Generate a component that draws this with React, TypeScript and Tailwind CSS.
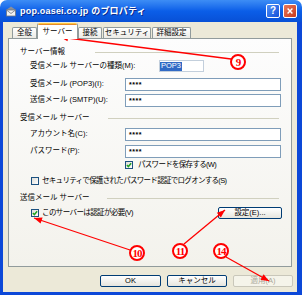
import React from "react";

const font = "font-['Liberation_Sans','Noto_Sans_CJK_JP',sans-serif]";

const Field = ({ value }: { value: string }) => (
  <div className="w-[156px] h-[13px] border border-[#7F9DB9] bg-white flex items-center pl-[3px] text-[7px] font-bold tracking-[0.5px]">
    {value}
  </div>
);

const Check = ({ checked }: { checked?: boolean }) => (
  <div className="w-[8px] h-[8px] border border-[#1C5180] bg-linear-to-br from-[#DCDCD7] to-white flex items-center justify-center shrink-0">
    {checked && (
      <svg viewBox="0 0 7 7" className="w-[6px] h-[6px]">
        <path d="M1 3.4 L2.8 5.3 L6 1.5" stroke="#21A121" strokeWidth="1.7" fill="none" />
      </svg>
    )}
  </div>
);

const Heading = ({ label, w, line }: { label: string; w: string; line: string }) => (
  <div className="flex items-center h-[14px]">
    <div className={w}>{label}</div>
    <div className={`${line} h-px bg-[#D0D0BF]`} />
  </div>
);

const Tab = ({ label, w, active }: { label: string; w: string; active?: boolean }) =>
  active ? (
    <div className={`${w} h-[16px] -mb-px border-x border-[#919B9C] bg-white rounded-t-[2px] flex flex-col`}>
      <div className="h-[2px] bg-[#E68B2C] rounded-t-[2px] border-t border-[#FFC73C]" />
      <div className="flex-1 flex items-center justify-center">{label}</div>
    </div>
  ) : (
    <div className={`${w} h-[11px] border-x border-t border-[#919B9C] rounded-t-[2px] bg-linear-to-b from-white to-[#ECEBE6] flex items-center justify-center`}>
      {label}
    </div>
  );

const Button = ({ label, w, disabled }: { label: string; w: string; disabled?: boolean }) => (
  <div
    className={`${w} h-[12px] rounded-[2px] border flex items-center justify-center ${
      disabled
        ? "border-[#C9C7BA] text-[#ACA899] bg-[#F5F4EA]"
        : "border-[#003C74] bg-linear-to-b from-white to-[#E6E5DE]"
    }`}
  >
    {label}
  </div>
);

const arrows = [
  { x1: 231, y1: 59, x2: 60, y2: 37 },
  { x1: 130, y1: 250, x2: 34, y2: 218 },
  { x1: 184, y1: 244, x2: 225, y2: 210 },
  { x1: 226, y1: 257, x2: 269, y2: 281 },
];

const marks = [
  { n: "9", x: 238, y: 62 },
  { n: "10", x: 137, y: 253 },
  { n: "11", x: 180, y: 251 },
  { n: "14", x: 221, y: 251 },
];

const head = (a: { x1: number; y1: number; x2: number; y2: number }) => {
  const dx = a.x2 - a.x1;
  const dy = a.y2 - a.y1;
  const len = Math.hypot(dx, dy);
  const ux = dx / len;
  const uy = dy / len;
  const bx = a.x2 - ux * 8;
  const by = a.y2 - uy * 8;
  const px = -uy * 3.2;
  const py = ux * 3.2;
  return `${a.x2},${a.y2} ${bx + px},${by + py} ${bx - px},${by - py}`;
};

export default function App() {
  return (
    <div className={`relative w-[302px] h-[295px] bg-white ${font} text-[7.5px] leading-none text-black`}>
      <div className="flex flex-col w-full h-full">
        {/* title bar */}
        <div className="h-[22px] rounded-t-[7px] bg-linear-to-b from-[#3D8DF5] via-[#0B5EE8] to-[#0850D6] flex items-center pl-[5px] pr-[5px]">
          <svg viewBox="0 0 12 12" className="w-[12px] h-[12px]">
            <path d="M1 5 L6 1.5 L11 5 Z" fill="#8A8F98" />
            <rect x="1.5" y="5" width="9" height="6" fill="#F2F2F2" stroke="#6D7480" strokeWidth="0.8" />
            <path d="M1.5 5 L6 8.5 L10.5 5" fill="none" stroke="#6D7480" strokeWidth="0.8" />
          </svg>
          <div className="ml-[3px] text-white font-bold text-[9px] tracking-[0.2px] [text-shadow:1px_1px_0_#0A2C8F]">
            pop.oasei.co.jp のプロパティ
          </div>
          <div className="ml-auto flex gap-[3px]">
            <div className="w-[14px] h-[14px] rounded-[2px] border border-white bg-linear-to-br from-[#4F8FF7] to-[#1650D8] flex items-center justify-center text-white font-bold text-[10px]">
              ?
            </div>
            <div className="w-[14px] h-[14px] rounded-[2px] border border-white bg-linear-to-br from-[#E9785A] to-[#C8391A] flex items-center justify-center">
              <svg viewBox="0 0 10 10" className="w-[8px] h-[8px]">
                <path d="M2 2 L8 8 M8 2 L2 8" stroke="white" strokeWidth="1.8" />
              </svg>
            </div>
          </div>
        </div>

        {/* body */}
        <div className="flex-1 flex flex-col bg-[#ECE9D8] border-l-[3px] border-r-[5px] border-b-[3px] border-[#0C48D8]">
          <div className="relative z-10 mt-px h-[15px] flex items-end ml-[9px]">
            <Tab label="全般" w="w-[25px]" />
            <Tab label="サーバー" w="w-[41px]" active />
            <Tab label="接続" w="w-[24px]" />
            <div className="w-px" />
            <Tab label="セキュリティ" w="w-[48px]" />
            <div className="w-px" />
            <Tab label="詳細設定" w="w-[39px]" />
          </div>

          <div className="h-[229px] ml-[5px] mr-[5px] border border-[#919B9C] bg-linear-to-b from-[#FDFDFD] to-[#F3F2EC] flex flex-col pl-[11px]">
            <div className="mt-[6px]">
              <Heading label="サーバー情報" w="w-[75px]" line="w-[184px]" />
            </div>
            <div className="h-[14px] flex items-center pl-[10px]">
              <div className="w-[129px]">受信メール サーバーの種類(M):</div>
              <div className="w-[45px] h-[12px] border border-[#C3CFDC] bg-white flex items-center">
                <span className="bg-[#316AC5] text-white px-px h-[9px] flex items-center">POP3</span>
              </div>
            </div>
            <div className="mt-[4px] h-[14px] flex items-center pl-[10px]">
              <div className="w-[95px]">受信メール (POP3)(I):</div>
              <Field value="****" />
            </div>
            <div className="mt-[2px] h-[14px] flex items-center pl-[10px]">
              <div className="w-[95px]">送信メール (SMTP)(U):</div>
              <Field value="****" />
            </div>
            <div className="mt-[4px]">
              <Heading label="受信メール サーバー" w="w-[88px]" line="w-[171px]" />
            </div>
            <div className="mt-[2px] h-[14px] flex items-center pl-[10px]">
              <div className="w-[95px]">アカウント名(C):</div>
              <Field value="****" />
            </div>
            <div className="mt-[3px] h-[14px] flex items-center pl-[10px]">
              <div className="w-[95px]">パスワード(P):</div>
              <Field value="****" />
            </div>
            <div className="h-[14px] flex items-center pl-[105px] gap-[5px]">
              <Check checked />
              <span className="tracking-[-0.7px]">パスワードを保存する(W)</span>
            </div>
            <div className="mt-[2px] h-[14px] flex items-center pl-[11px] gap-[3px]">
              <Check />
              <span className="tracking-[-0.7px]">セキュリティで保護されたパスワード認証でログオンする(S)</span>
            </div>
            <div className="mt-[3px]">
              <Heading label="送信メール サーバー" w="w-[87px]" line="w-[172px]" />
            </div>
            <div className="mt-px h-[14px] flex items-center pl-[11px] gap-[3px] pr-[9px]">
              <Check checked />
              <span className="tracking-[-0.6px]">このサーバーは認証が必要(V)</span>
              <div className="ml-auto">
                <Button label="設定(E)..." w="w-[64px]" />
              </div>
            </div>
          </div>

          <div className="mt-[8px] flex justify-end gap-[6px] pr-[4px]">
            <Button label="OK" w="w-[61px]" />
            <Button label="キャンセル" w="w-[60px]" />
            <Button label="適用(A)" w="w-[60px]" disabled />
          </div>
        </div>
      </div>

      {/* annotations */}
      <svg className="absolute inset-0 pointer-events-none" width="302" height="295">
        {arrows.map((a, i) => (
          <g key={i}>
            <line x1={a.x1} y1={a.y1} x2={a.x2} y2={a.y2} stroke="#FF0000" strokeWidth="1.3" />
            <polygon points={head(a)} fill="#FF0000" />
          </g>
        ))}
      </svg>
      {marks.map((m) => (
        <div
          key={m.n}
          className="absolute w-[16px] h-[16px] -ml-[8px] -mt-[8px] rounded-full border-2 border-[#FF0000] bg-white flex items-center justify-center text-[#FF0000] font-bold font-['Liberation_Serif',serif] text-[11px] tracking-[-1px]"
          style={{ left: m.x, top: m.y }}
        >
          {m.n}
        </div>
      ))}
    </div>
  );
}
